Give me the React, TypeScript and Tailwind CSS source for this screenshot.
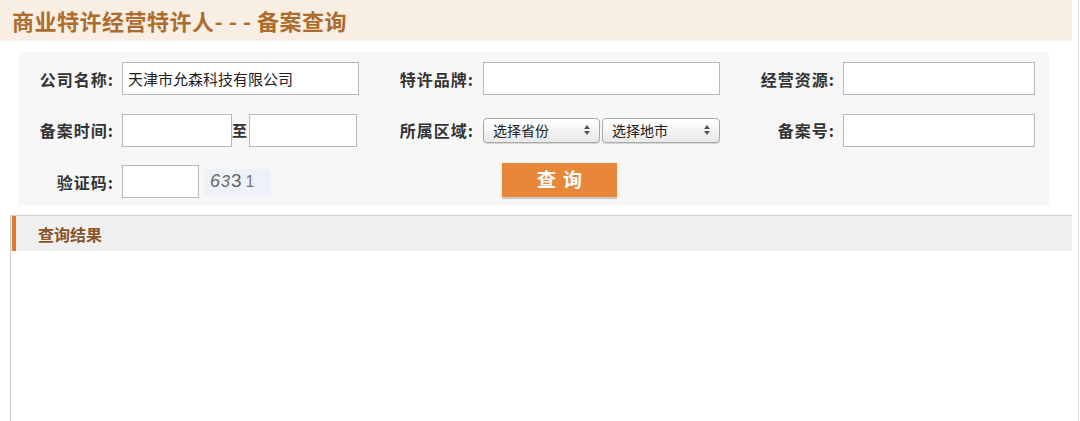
import React from "react";

const font = { fontFamily: '"Noto Sans CJK SC", "Noto Sans", sans-serif' };

function Label({ text, width }: { text: string; width: string }) {
  return (
    <div className={`${width} shrink-0 text-right text-[16px] font-bold text-[#333] tracking-[1px]`}>
      {text}
    </div>
  );
}

function TextBox({ width, value }: { width: string; value?: string }) {
  return (
    <input
      readOnly
      value={value ?? ""}
      className={`${width} h-[33px] shrink-0 border border-[#b8b8b8] bg-white px-[5px] text-[15px] text-[#222] outline-none`}
    />
  );
}

function FakeSelect({ text, width }: { text: string; width: string }) {
  return (
    <div
      className={`${width} h-[25px] shrink-0 flex items-center justify-between rounded-[4px] border border-[#a9a9a9] bg-gradient-to-b from-white to-[#e9e9e9] pl-[9px] pr-[9px] text-[14px] text-[#222] shadow-[0_1px_1px_rgba(0,0,0,0.15)]`}
    >
      <span>{text}</span>
      <svg width="6" height="10" viewBox="0 0 6 10" className="shrink-0">
        <path d="M0 4 L3 0 L6 4 Z" fill="#555" />
        <path d="M0 6 L3 10 L6 6 Z" fill="#555" />
      </svg>
    </div>
  );
}

export default function App() {
  return (
    <div className="w-[1080px] h-[421px] bg-white overflow-hidden" style={font}>
      <div className="w-[1079px] h-full border-r border-[#dcdcdc]">
        {/* Title bar */}
        <div className="w-[1072px] h-[41px] bg-[#f8eee4] flex items-center pl-[12px]">
          <h1 className="text-[22px] font-bold text-[#ad6c2d] tracking-[0.5px]">
            商业特许经营特许人- - - 备案查询
          </h1>
        </div>

        {/* Search form */}
        <div className="ml-[19px] mt-[11px] w-[1030px] h-[153px] bg-[#f7f7f7] pt-[10px]">
          {/* Row 1 */}
          <div className="flex items-center h-[33px]">
            <Label text="公司名称:" width="w-[95px]" />
            <div className="ml-[8px]">
              <TextBox width="w-[237px]" value="天津市允森科技有限公司" />
            </div>
            <Label text="特许品牌:" width="w-[115px]" />
            <div className="ml-[9px]">
              <TextBox width="w-[237px]" />
            </div>
            <Label text="经营资源:" width="w-[115px]" />
            <div className="ml-[8px]">
              <TextBox width="w-[192px]" />
            </div>
          </div>

          {/* Row 2 */}
          <div className="flex items-center h-[34px] mt-[18px]">
            <Label text="备案时间:" width="w-[95px]" />
            <div className="ml-[8px] flex items-center">
              <TextBox width="w-[110px]" />
              <span className="w-[17px] text-[15px] font-bold text-[#333]">至</span>
              <TextBox width="w-[108px]" />
            </div>
            <Label text="所属区域:" width="w-[117px]" />
            <div className="ml-[9px] flex items-center gap-[2px]">
              <FakeSelect text="选择省份" width="w-[117px]" />
              <FakeSelect text="选择地市" width="w-[118px]" />
            </div>
            <Label text="备案号:" width="w-[115px]" />
            <div className="ml-[8px]">
              <TextBox width="w-[192px]" />
            </div>
          </div>

          {/* Row 3 */}
          <div className="flex items-center h-[33px] mt-[18px]">
            <Label text="验证码:" width="w-[95px]" />
            <div className="ml-[8px] flex items-center">
              <TextBox width="w-[77px]" />
              <div
                className="ml-[5px] w-[67px] h-[26px] bg-[#edf2f9] flex items-center pl-[6px] text-[18px] text-[#666] tracking-[1px]"
                style={{ fontFamily: '"Liberation Sans", sans-serif' }}
              >
                <span className="italic">6</span>
                <span className="italic text-[16px]">3</span>
                <span className="text-[19px]">3</span>
                <span className="font-light text-[16px] ml-[3px] text-[#777]">1</span>
              </div>
            </div>
            <button className="ml-[231px] -mt-[4px] w-[115px] h-[34px] bg-[#e8863a] text-white text-[19px] font-bold tracking-[7px] pl-[7px] shadow-[0_2px_1px_rgba(0,0,0,0.18)]">
              查询
            </button>
          </div>
        </div>

        {/* Results */}
        <div className="ml-[10px] mt-[10px] w-[1062px] h-[210px] border-l border-t border-[#cfcfcf]">
          <div className="h-[35px] bg-[#f0f0f0] flex items-center">
            <div className="ml-[1px] w-[4px] h-full bg-[#e07a2e]" />
            <span className="ml-[22px] text-[16px] font-bold text-[#8a5428]">查询结果</span>
          </div>
        </div>
      </div>
    </div>
  );
}
